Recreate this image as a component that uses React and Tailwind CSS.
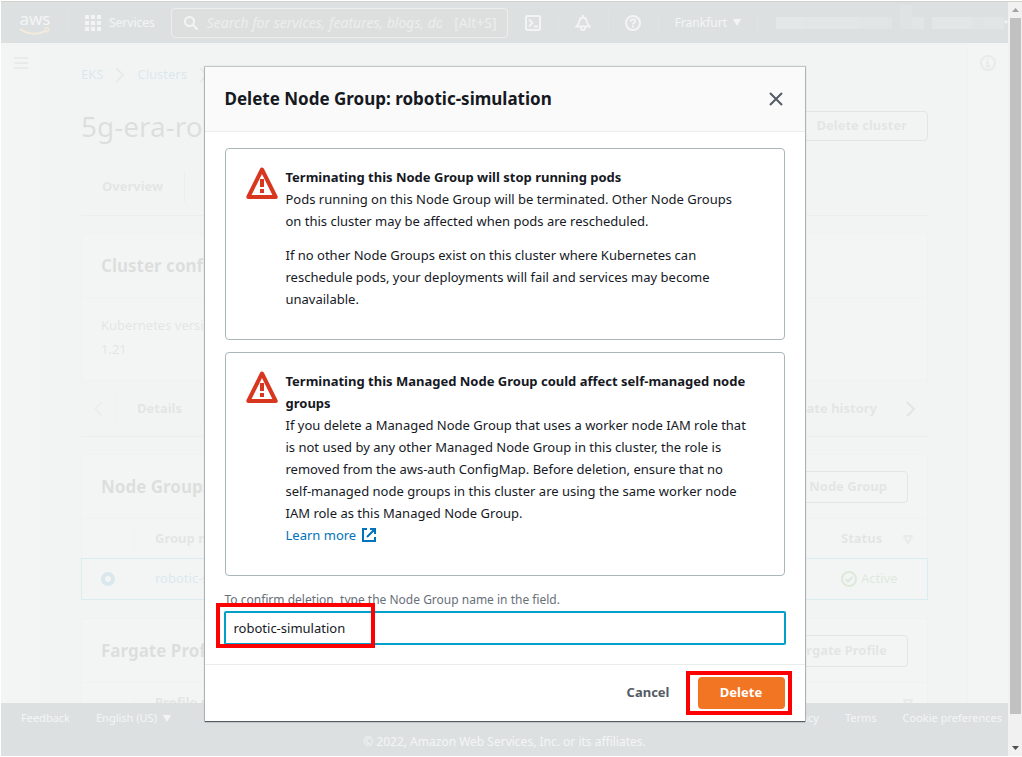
import React from "react";

const WarningIcon = () => (
  <svg viewBox="0 0 32 32" className="h-8 w-8 shrink-0" aria-hidden="true">
    <path d="M16 2.500 L29.700 30 H2.300 Z" fill="none" stroke="#d93620" strokeWidth="4" strokeLinejoin="round" />
    <path d="M14 12h4v8h-4zM14 22h4v4h-4z" fill="#d93620" />
  </svg>
);

const Chevron = ({ flip }) => (
  <svg viewBox="0 0 10 16" className={flip ? "h-4 w-[10px] rotate-180" : "h-4 w-[10px]"} aria-hidden="true">
    <path d="M1 1l7 7-7 7" fill="none" stroke="currentColor" strokeWidth="2" />
  </svg>
);

const Caret = () => (
  <svg viewBox="0 0 8 7" className="h-[7px] w-2" aria-hidden="true">
    <path d="M0 0h8L4 7z" fill="currentColor" />
  </svg>
);

const SortIcon = () => (
  <svg viewBox="0 0 10 9" className="h-[9px] w-[10px]" aria-hidden="true">
    <path d="M1 1h8L5 8z" fill="none" stroke="#879596" strokeWidth="2" />
  </svg>
);

const AwsLogo = () => (
  <a href="#home" aria-label="aws" className="relative flex h-8 w-8 flex-col items-center text-[17px] leading-6 text-white">
    <span>aws</span>
    <svg viewBox="0 0 32 8" className="absolute bottom-1 left-0 h-2 w-8" aria-hidden="true">
      <path d="M1 2c8 6 20 6 27 1" fill="none" stroke="#ff9900" strokeWidth="2" />
      <path d="M25 1.500c2-1 5-1 5 0s-1 3-2 4" fill="none" stroke="#ff9900" strokeWidth="1.300" />
    </svg>
  </a>
);

const NavDivider = () => <span className="h-[22px] w-px shrink-0 bg-[#3f4b5a]" />;

const redaction = [
  "h-3 w-7 bg-[#66707c]",
  "h-3 w-6 bg-[#5a6470]",
  "h-3 w-8 bg-[#606a76]",
  "h-3 w-7 bg-[#525d69]",
  "mr-2 h-3 w-1 bg-[#46515e]",
  "-mt-3 h-6 w-3 bg-[#3d4856]",
  "mr-2 h-3 w-3 bg-[#525d69]",
  "h-3 w-10 bg-[#5a6470]",
  "h-3 w-3 bg-[#4a5562]",
  "h-3 w-5 bg-[#525d69]",
];

const TopNav = () => (
  <header className="flex h-[41px] shrink-0 items-center bg-[#16303a] text-[12px] text-white">
    <div className="flex items-center pl-[18px]">
      <AwsLogo />
      <div className="ml-4 flex items-center">
        <NavDivider />
      </div>
      <button type="button" className="ml-[17px] flex items-center gap-2">
        <svg viewBox="0 0 16 16" className="h-4 w-4" fill="currentColor" aria-hidden="true">
          <path d="M0 0h4v4H0zM6 0h4v4H6zM12 0h4v4h-4zM0 6h4v4H0zM6 6h4v4H6zM12 6h4v4h-4zM0 12h4v4H0zM6 12h4v4H6zM12 12h4v4h-4z" />
        </svg>
        Services
      </button>
    </div>
    <label className="ml-4 flex h-[30px] min-w-0 flex-1 items-center rounded-sm border border-[#aab7b8] bg-[#1f242c] pr-[10px] pl-3">
      <svg viewBox="0 0 14 14" className="h-[14px] w-[14px] shrink-0" fill="none" stroke="currentColor" strokeWidth="2" aria-hidden="true">
        <circle cx="5.500" cy="5.500" r="4.500" />
        <path d="M9 9l4.500 4.500" />
      </svg>
      <input
        aria-label="Search"
        placeholder="Search for services, features, blogs, docs, and more"
        className="mr-3 ml-[9px] min-w-0 flex-1 bg-transparent text-[14px] italic outline-none placeholder:text-[#aab7b8]"
      />
      <span className="text-[14px] text-[#aab7b8]">[Alt+S]</span>
    </label>
    <div className="flex shrink-0 items-center gap-4 pl-[17px]">
      <button type="button" aria-label="CloudShell" className="w-[17px]">
        <svg viewBox="0 0 16 16" className="h-4 w-4" fill="none" stroke="currentColor" strokeWidth="2" aria-hidden="true">
          <rect x="1" y="1" width="14" height="14" rx="1.500" />
          <path d="M4 4.500L7.500 8 4 11.500M9 11.500h4" />
        </svg>
      </button>
      <NavDivider />
      <button type="button" aria-label="Notifications" className="w-[17px]">
        <svg viewBox="0 0 16 16" className="h-4 w-4" fill="none" stroke="currentColor" strokeWidth="1.800" aria-hidden="true">
          <path d="M1.500 11.500h13C12.500 9.500 12 8 11.500 5.500 11 3 9.800 2.500 8 2.500S5 3 4.500 5.500C4 8 3.500 9.500 1.500 11.500zM8 0v2.500M6 12v1.500c0 2 4 2 4 0V12" />
        </svg>
      </button>
      <NavDivider />
      <button type="button" aria-label="Support" className="w-[17px]">
        <svg viewBox="0 0 16 16" className="h-4 w-4" fill="none" stroke="currentColor" strokeWidth="2" aria-hidden="true">
          <circle cx="8" cy="8" r="7" />
          <path d="M5.700 6.700c0-3 4.600-3 4.600-.4 0 1.600-2.300 1.500-2.300 3.200M8 10.500v2" strokeWidth="1.800" />
        </svg>
      </button>
      <NavDivider />
      <button type="button" className="flex items-center gap-[6px]">
        Frankfurt
        <Caret />
      </button>
      <NavDivider />
      <button type="button" aria-label="Account" className="flex w-[234px] items-center">
        <span className="ml-[2px] flex items-end">
          {redaction.map((c, i) => (
            <span key={i} className={c} />
          ))}
        </span>
        <Caret />
      </button>
    </div>
  </header>
);

const outlineButton =
  "rounded-sm border border-[#545b64] px-5 text-[13px] font-bold text-[#545b64]";

const CardHeader = ({ title, action }) => (
  <div className="flex h-16 items-center justify-between border-b border-[#d5dbdb] px-[19px]">
    <h2 className="text-[17px] font-bold text-[#16191f]">{title}</h2>
    {action && (
      <button type="button" className={outlineButton + " h-8"}>
        {action}
      </button>
    )}
  </div>
);

const cardClass = "border border-[#d5dbdb] bg-[#fafafa]";

const ClusterPage = () => (
  <main className="min-w-0 flex-1 overflow-hidden px-[39px]">
    <nav aria-label="Breadcrumb" className="flex h-[63px] items-center gap-3 text-[13px] text-[#0073bb]">
      <a href="#eks">EKS</a>
      <span className="text-[#879596]"><Chevron /></span>
      <a href="#clusters">Clusters</a>
      <span className="text-[#879596]"><Chevron /></span>
      <span className="text-[#687078]">5g-era-robotics</span>
    </nav>
    <div className="flex h-10 items-center justify-between">
      <h1 className="text-[28px] leading-8 text-[#16191f]">5g-era-robotics</h1>
      <button type="button" className={outlineButton + " h-[30px]"}>Delete cluster</button>
    </div>
    <div className="mt-[26px] flex h-11 items-start border-b border-[#aab7b8] text-[13px] font-bold text-[#545b64]">
      <button type="button" className="h-[30px] border-r border-[#aab7b8] px-[21px]">Overview</button>
      <button type="button" className="h-[30px] px-5">Workloads</button>
    </div>
    <section className={cardClass + " mt-[17px] h-[148px]"}>
      <CardHeader title="Cluster configuration" />
      <dl className="px-[19px] pt-[15px] text-[13px] leading-6 text-[#545b64]">
        <dt>Kubernetes version</dt>
        <dd>1.21</dd>
      </dl>
    </section>
    <div className="flex h-14 items-center border-b border-[#aab7b8] text-[13px] font-bold text-[#545b64]">
      <button type="button" aria-label="Previous tabs" className="flex h-8 w-[35px] items-center border-r border-[#d5dbdb] pl-3 text-[#aab7b8]"><Chevron flip /></button>
      <button type="button" className="h-8 border-r border-[#d5dbdb] px-[21px]">Details</button>
      <button type="button" className="ml-auto h-8 border-r border-[#d5dbdb] px-4">Update history</button>
      <button type="button" aria-label="Next tabs" className="flex h-8 w-[34px] items-center pl-3"><Chevron /></button>
    </div>
    <section className={cardClass + " mt-[17px] h-[146px]"}>
      <CardHeader title="Node Groups" action="Add Node Group" />
      <table className="w-full text-left text-[13px]">
        <thead>
          <tr className="h-10 text-[#545b64]">
            <th className="w-[53px]"><span className="block h-5 border-r border-[#d5dbdb]" /></th>
            <th className="pl-5">Group name</th>
            <th className="w-[86px]">
              <span className="flex items-center justify-between pr-[14px]">Status <SortIcon /></span>
            </th>
          </tr>
        </thead>
        <tbody>
          <tr className="h-10 outline outline-[#00a1c9]">
            <td className="pl-[19px]">
              <input
                type="radio"
                name="group"
                defaultChecked
                aria-label="robotic-simulation group"
                className="block h-[14px] w-[14px] appearance-none rounded-full border-4 border-[#0073bb] bg-white"
              />
            </td>
            <td className="pl-5"><a href="#group" className="text-[#0073bb]">robotic-simulation</a></td>
            <td>
              <span className="flex items-center gap-1 text-[#1d8102]">
                <svg viewBox="0 0 16 16" className="h-4 w-4" fill="none" stroke="currentColor" strokeWidth="2" aria-hidden="true">
                  <circle cx="8" cy="8" r="7" />
                  <path d="M4.500 8l2.500 2.500 4.500-4.500" />
                </svg>
                Active
              </span>
            </td>
          </tr>
        </tbody>
      </table>
    </section>
    <section className={cardClass + " mt-[18px]"}>
      <CardHeader title="Fargate Profiles" action="Add Fargate Profile" />
      <table className="w-full text-left text-[13px]">
        <thead>
          <tr className="h-10 text-[#545b64]">
            <th className="w-[53px]"><span className="block h-5 border-r border-[#d5dbdb]" /></th>
            <th className="pl-5">Profile name</th>
            <th className="w-[86px]">
              <span className="flex items-center justify-end pr-[14px]"><SortIcon /></span>
            </th>
          </tr>
        </thead>
      </table>
    </section>
  </main>
);

const PageFooter = () => (
  <footer className="h-[53px] shrink-0 bg-[#16303a] text-[11px] text-white">
    <div className="flex h-[30px] items-center gap-[26px] pr-[6px] pl-5">
      <button type="button">Feedback</button>
      <button type="button" className="flex items-center gap-[6px]">English (US) <Caret /></button>
      <a href="#privacy" className="ml-auto">Privacy</a>
      <a href="#terms">Terms</a>
      <a href="#cookies">Cookie preferences</a>
    </div>
    <p className="text-center leading-[18px] text-[12px]">© 2022, Amazon Web Services, Inc. or its affiliates.</p>
  </footer>
);

const Alert = ({ title, children, tall }) => (
  <section className={(tall ? "h-56" : "h-48") + " flex gap-2 rounded-sm border border-[#aab7b8] pt-[18px] pr-[35px] pl-5 text-[13px] leading-[22px] text-[#16191f]"}>
    <WarningIcon />
    <div className="-mt-px min-w-0 flex-1">
      <h3 className="font-bold">{title}</h3>
      {children}
    </div>
  </section>
);

const DeleteDialog = () => (
  <div role="dialog" aria-modal="true" aria-labelledby="dialog-title" className="w-[600px] bg-white shadow-[0_1px_1px_#545b64,0_0_1px_1px_#c0c5c5]">
    <div className="flex h-[65px] items-center justify-between border-b border-[#eaeded] bg-[#fafafa] px-5">
      <h2 id="dialog-title" className="text-[17px] leading-6 font-bold text-[#16191f]">Delete Node Group: robotic-simulation</h2>
      <button type="button" aria-label="Close" className="p-[2px]">
        <svg viewBox="0 0 14 14" className="h-[14px] w-[14px]" aria-hidden="true">
          <path d="M1 1l12 12M13 1L1 13" stroke="#545b64" strokeWidth="2" />
        </svg>
      </button>
    </div>
    <div className="flex flex-col px-5 pt-4 pb-5">
      <div className="flex flex-col gap-3">
        <Alert title="Terminating this Node Group will stop running pods">
          <p>Pods running on this Node Group will be terminated. Other Node Groups on this cluster may be affected when pods are rescheduled.</p>
          <p className="mt-3">If no other Node Groups exist on this cluster where Kubernetes can reschedule pods, your deployments will fail and services may become unavailable.</p>
        </Alert>
        <Alert tall title="Terminating this Managed Node Group could affect self-managed node groups">
          <p>If you delete a Managed Node Group that uses a worker node IAM role that is not used by any other Managed Node Group in this cluster, the role is removed from the aws-auth ConfigMap. Before deletion, ensure that no self-managed node groups in this cluster are using the same worker node <span className="whitespace-nowrap">IAM role</span> as this Managed Node Group.</p>
          <a href="#learn" className="inline-flex items-center gap-[6px] text-[#0073bb]">
            Learn more
            <svg viewBox="0 0 14 14" className="h-[14px] w-[14px]" fill="none" stroke="currentColor" strokeWidth="2" aria-hidden="true">
              <path d="M5 1H1v12h12V9M8 1h5v5M13 1L5 9" />
            </svg>
          </a>
        </Alert>
      </div>
      <label htmlFor="confirm" className="mt-4 text-[12px] leading-4 text-[#687078]">
        To confirm deletion, type the Node Group name in the field.
      </label>
      <div className="relative mt-1">
        <input
          id="confirm"
          defaultValue="robotic-simulation"
          className="block h-8 w-full rounded-[1px] border border-[#00a1c9] bg-white px-2 text-[13px] text-[#16191f] ring-1 ring-[#00a1c9] outline-none"
        />
        <span className="pointer-events-none absolute -top-[9px] -left-[9px] h-[45px] w-[159px] border-4 border-[#ff0000]" />
      </div>
    </div>
    <div className="flex h-[57px] items-center justify-end gap-7 border-t border-[#eaeded] px-5 text-[13px] font-bold">
      <button type="button" className="text-[#545b64]">Cancel</button>
      <div className="relative">
        <button type="button" className="h-8 w-[87px] rounded-sm bg-[#f27524] text-white">Delete</button>
        <span className="pointer-events-none absolute -top-[6px] -left-3 h-11 w-[106px] border-4 border-[#ff0000]" />
      </div>
    </div>
  </div>
);

const Scrollbar = () => (
  <div className="flex w-[14px] shrink-0 flex-col items-center bg-[#f1f1f1]" aria-hidden="true">
    <svg viewBox="0 0 7 4" className="my-[6px] h-1 w-[7px]"><path d="M0 4h7L3.500 0z" fill="#a3a3a3" /></svg>
    <div className="w-[11px] flex-1 bg-[#c1c1c1]" />
    <svg viewBox="0 0 7 4" className="mt-8 mb-[6px] h-1 w-[7px]"><path d="M0 0h7L3.500 4z" fill="#505050" /></svg>
  </div>
);

export default function App() {
  return (
    <div className="flex h-screen flex-col bg-white pb-px pl-px font-['Noto_Sans',sans-serif]">
      <div className="mt-px flex min-h-0 flex-1 border-t border-[#cfd1ca]">
        <div className="relative flex min-w-0 flex-1 flex-col">
          <TopNav />
          <div className="flex min-h-0 flex-1 bg-[#f0f3f2]">
            <aside className="w-[41px] shrink-0 border-r border-[#d5dbdb] bg-[#fafafa] pt-[14px] pl-[13px]">
              <button type="button" aria-label="Open menu" className="block text-[#879596]">
                <svg viewBox="0 0 14 12" className="h-3 w-[14px]" aria-hidden="true">
                  <path d="M0 1h14M0 6h14M0 11h14" stroke="currentColor" strokeWidth="2" />
                </svg>
              </button>
            </aside>
            <ClusterPage />
            <aside className="w-[41px] shrink-0 border-l border-[#d5dbdb] bg-[#fafafa] pt-3 pl-3">
              <button type="button" aria-label="Open info" className="block text-[#879596]">
                <svg viewBox="0 0 16 16" className="h-4 w-4" fill="none" stroke="currentColor" strokeWidth="2" aria-hidden="true">
                  <circle cx="8" cy="8" r="7" />
                  <path d="M8 3.500v2M6 7.500h2V11M5.500 11.500h5" />
                </svg>
              </button>
            </aside>
          </div>
          <PageFooter />
          <div className="absolute inset-0 flex items-start justify-center bg-[#f2f4f3]/90 pt-[65px]">
            <DeleteDialog />
          </div>
        </div>
        <Scrollbar />
      </div>
    </div>
  );
}
